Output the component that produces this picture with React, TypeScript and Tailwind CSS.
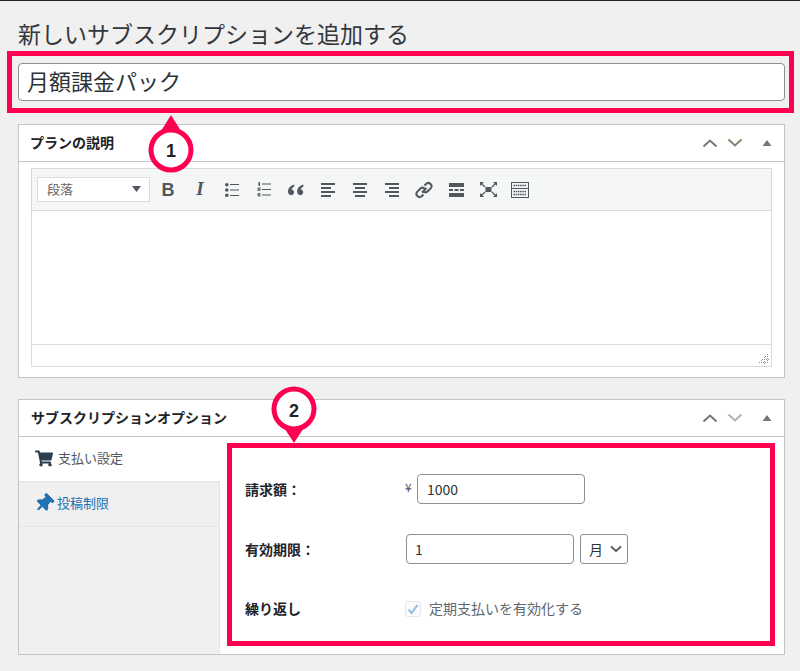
import type { ReactNode } from "react";
import { FaShoppingCart, FaThumbtack } from "react-icons/fa";

const pink = "#ff0050";
const ink = "#50575e";

function Chevrons({ down }: { down: string }) {
  return (
    <div className="flex items-center">
      <svg width="16" height="10" viewBox="0 0 16 10" className="mr-[9px]">
        <path d="M1.5 8.5 8 2.5l6.5 6" fill="none" stroke="#72777c" strokeWidth="2" />
      </svg>
      <svg width="16" height="10" viewBox="0 0 16 10" className="mr-[19px]">
        <path d="M1.5 1.5 8 7.5l6.5-6" fill="none" stroke={down} strokeWidth="2" />
      </svg>
      <svg width="10" height="6" viewBox="0 0 10 6" className="mr-[6px]">
        <path d="M5 0l4.5 6h-9z" fill="#72777c" />
      </svg>
    </div>
  );
}

function Tool({ children }: { children: ReactNode }) {
  return <span className="flex h-[32px] w-[32px] items-center justify-center">{children}</span>;
}

function Align({ rows }: { rows: number[][] }) {
  return (
    <svg width="14" height="14" viewBox="0 0 14 14">
      {rows.map(([x, w], i) => (
        <rect key={i} x={x} y={i * 4} width={w} height="2" fill={ink} />
      ))}
    </svg>
  );
}

function Toolbar() {
  return (
    <div className="flex h-[42px] items-center border-b border-[#dcdcde] bg-[#f5f6f6] pl-[5px] shadow-[0_1px_2px_rgba(0,0,0,0.08)]">
      <div className="flex h-[25px] w-[113px] items-center justify-between border border-[#dcdcde] bg-white pb-[2px] pl-[9px] pr-[8px] text-[13px] text-[#666]">
        段落
        <svg width="9" height="6" viewBox="0 0 9 6">
          <path d="M0 0h9L4.5 6z" fill={ink} />
        </svg>
      </div>
      <div className="ml-[2px] flex items-center">
        <Tool>
          <span className="pt-[2px] font-['Liberation_Sans',sans-serif] text-[18px] font-bold text-[#50575e]">B</span>
        </Tool>
        <Tool>
          <span className="font-['Liberation_Serif',serif] text-[19px] font-bold italic text-[#50575e]">I</span>
        </Tool>
        <Tool>
          <svg width="14" height="14" viewBox="0 0 14 14">
            <circle cx="1.8" cy="1.8" r="1.8" fill={ink} />
            <circle cx="1.8" cy="7" r="1.8" fill={ink} />
            <circle cx="1.8" cy="12.2" r="1.8" fill={ink} />
            <rect x="5" y="1" width="9" height="1" fill={ink} />
            <rect x="5" y="6.5" width="9" height="1" fill={ink} />
            <rect x="5" y="12" width="9" height="1" fill={ink} />
          </svg>
        </Tool>
        <Tool>
          <svg width="14" height="15" viewBox="0 0 14 15">
            <rect x="1.5" y="0" width="1.5" height="4" fill={ink} />
            <rect x="0.5" y="5.5" width="3" height="3.5" fill={ink} opacity="0.8" />
            <rect x="0.5" y="11" width="3" height="3.5" fill={ink} opacity="0.8" />
            <rect x="5" y="1.5" width="9" height="1" fill={ink} />
            <rect x="5" y="7" width="9" height="1" fill={ink} />
            <rect x="5" y="12.5" width="9" height="1" fill={ink} />
          </svg>
        </Tool>
        <Tool>
          <svg width="16" height="12" viewBox="1.5 2.5 14 9.5">
            <path d="M7 2.5C4 3.5 1.5 5.5 1.5 8.6c0 2 1.2 3.1 2.7 3.1s2.6-1.1 2.6-2.5-1-2.4-2.3-2.4c.4-1.1 1.3-2 2.5-2.7zM15 2.5c-3 1-5.5 3-5.5 6.1 0 2 1.2 3.1 2.7 3.1s2.6-1.1 2.6-2.5-1-2.4-2.3-2.4c.4-1.1 1.3-2 2.5-2.7z" fill={ink} />
          </svg>
        </Tool>
        <Tool>
          <Align rows={[[0, 14], [0, 10], [0, 14], [0, 10]]} />
        </Tool>
        <Tool>
          <Align rows={[[0, 14], [2, 10], [0, 14], [2, 10]]} />
        </Tool>
        <Tool>
          <Align rows={[[0, 14], [4, 10], [0, 14], [4, 10]]} />
        </Tool>
        <Tool>
          <svg width="18" height="18" viewBox="0 0 18 18">
            <path d="M7 11.5l4.5-4.5M9.5 4.5l1.8-1.8a3.2 3.2 0 0 1 4.5 4.5l-3 3a3.2 3.2 0 0 1-4.3.3M8.5 13.5l-1.8 1.8a3.2 3.2 0 0 1-4.5-4.5l3-3a3.2 3.2 0 0 1 4.3-.3" fill="none" stroke={ink} strokeWidth="2" />
          </svg>
        </Tool>
        <Tool>
          <svg width="15" height="14" viewBox="0 0 15 14">
            <rect y="0" width="15" height="4" fill={ink} />
            <rect y="10" width="15" height="4" fill={ink} />
            <rect y="6" width="4" height="2" fill={ink} />
            <rect x="5.5" y="6" width="4" height="2" fill={ink} />
            <rect x="11" y="6" width="4" height="2" fill={ink} />
          </svg>
        </Tool>
        <Tool>
          <svg width="17" height="15" viewBox="0 0 17 15">
            <rect x="5.5" y="5" width="6" height="5" fill={ink} />
            <path d="M1 1l4 4M16 1l-4 4M1 14l4-4M16 14l-4-4" stroke={ink} strokeWidth="1.2" />
            <path d="M0 0h4L0 4zM17 0h-4l4 4zM0 15h4l-4-4zM17 15h-4l4-4z" fill={ink} />
          </svg>
        </Tool>
        <Tool>
          <svg width="18" height="16" viewBox="0 0 18 16">
            <rect x=".5" y=".5" width="17" height="15" fill="none" stroke={ink} />
            <rect x="1" y="6" width="16" height="1" fill={ink} />
            <path d="M2.5 3.5h13M2.5 9.5h13M2.5 12.5h13" stroke={ink} strokeWidth="1.5" strokeDasharray="1.5 .7" />
          </svg>
        </Tool>
      </div>
    </div>
  );
}

function App() {
  return (
    <div className="relative h-[671px] w-[800px] overflow-hidden border-t border-[#1d2327] bg-[#f0f0f0] px-[18px] font-['Noto_Sans_CJK_JP','Noto_Sans',sans-serif] text-[#23282d]">
      <h1 className="pt-[18px] pb-[2px] text-[23px] font-normal leading-[28px] text-[#32373c]">新しいサブスクリプションを追加する</h1>

      <input
        readOnly
        value="月額課金パック"
        className="mt-[14px] block h-[38px] w-[767px] rounded-[4px] border border-[#8c8f94] bg-white px-[8px] pb-[5px] text-[22px] text-[#2c3338] outline-none"
      />

      {/* プランの説明 */}
      <section className="mt-[23px] h-[254px] w-[767px] border border-[#c3c4c7] bg-white">
        <header className="flex h-[37px] items-center justify-between border-b border-[#c3c4c7] pl-[11px] pr-[6px]">
          <h2 className="pb-[2px] text-[14px] font-bold text-[#1d2327]">プランの説明</h2>
          <Chevrons down="#8a7f6e" />
        </header>
        <div className="mx-[12px] mt-[6px] w-[741px] border border-[#dcdcde]">
          <Toolbar />
          <div className="h-[134px] border-b border-[#dcdcde] bg-white" />
          <div className="flex h-[21px] items-end justify-end p-[2px]">
            <svg width="10" height="10" viewBox="0 0 10 10">
              <path d="M8.5 0v10M5.5 3v7M2.5 6v4M0 8.5h10M3 5.500h7M6 2.500h4" stroke="#8c8f94" strokeDasharray="1 1" />
            </svg>
          </div>
        </div>
      </section>

      {/* サブスクリプションオプション */}
      <section className="mt-[21px] h-[256px] w-[767px] border border-[#c3c4c7] bg-white">
        <header className="flex h-[37px] items-center justify-between border-b border-[#c3c4c7] pl-[12px] pr-[6px]">
          <h2 className="pb-[2px] text-[14px] font-bold text-[#1d2327]">サブスクリプションオプション</h2>
          <Chevrons down="#a7b4be" />
        </header>
        <div className="flex h-[217px]">
          <nav className="w-[201px] border-r border-[#e4e4e4] bg-[#f0f0f0] text-[13px]">
            <div className="flex h-[44px] w-[201px] items-center gap-[5px] bg-white pb-[2px] pl-[16px] text-[#50575e]">
              <FaShoppingCart className="h-[17px] w-[18px] text-[#2c3e50]" />
              支払い設定
            </div>
            <div className="flex h-[46px] items-center gap-[4px] border-y border-[#e4e4e4] pb-[2px] pl-[16px] text-[#2271b1]">
              <FaThumbtack className="h-[19px] w-[18px] rotate-45 text-[#2271b1]" />
              投稿制限
            </div>
          </nav>
          <div className="flex-1 pl-[25px] pt-[37px] text-[14px]">
            <div className="flex h-[30px] items-center">
              <span className="w-[160px] font-bold text-[#1d2327]">請求額：</span>
              <span className="w-[12px] pb-[4px] text-[12px] text-[#50575e]">¥</span>
              <input readOnly value="1000" className="h-[30px] w-[168px] rounded-[4px] border border-[#8c8f94] px-[9px] text-[14px] text-[#2c3338] outline-none" />
            </div>
            <div className="mt-[30px] flex h-[30px] items-center">
              <span className="w-[161px] font-bold text-[#1d2327]">有効期限：</span>
              <input readOnly value="1" className="h-[30px] w-[168px] rounded-[4px] border border-[#8c8f94] px-[8px] text-[14px] text-[#2c3338] outline-none" />
              <div className="ml-[6px] flex h-[30px] w-[48px] items-center justify-between rounded-[3px] border border-[#8c8f94] pl-[8px] pr-[5px] text-[14px] text-[#2c3338]">
                月
                <svg width="12" height="8" viewBox="0 0 12 8">
                  <path d="M1 1.5l5 4.5 5-4.5" fill="none" stroke="#50575e" strokeWidth="1.8" />
                </svg>
              </div>
            </div>
            <div className="mt-[30px] flex h-[30px] items-center">
              <span className="w-[160px] pb-[2px] font-bold text-[#1d2327]">繰り返し</span>
              <span className="flex h-[16px] w-[16px] items-center justify-center rounded-[3px] border border-[#e3e5e7] bg-[#fbfbfc]">
                <svg width="12" height="11" viewBox="0 0 12 11">
                  <path d="M1.5 5.5l3 3.5 6-8" fill="none" stroke="#9dc3e2" strokeWidth="2.2" />
                </svg>
              </span>
              <span className="ml-[8px] pb-[2px] text-[#60676d]">定期支払いを有効化する</span>
            </div>
          </div>
        </div>
      </section>

      {/* 注釈 */}
      <div className="absolute left-[7px] top-[50px] h-[62px] w-[787px] border-[5px] border-[#ff0050]" />
      <svg className="absolute left-[148px] top-[113px]" width="46" height="60" viewBox="0 0 46 60">
        <path d="M23 1l10 16h-20z" fill={pink} />
        <circle cx="23" cy="36" r="20" fill="#fff" stroke={pink} strokeWidth="5" />
      </svg>
      <span className="absolute left-[148px] top-[137px] w-[46px] text-center font-['Liberation_Sans',sans-serif] text-[18px] font-bold text-[#1d2327]">1</span>
      <div className="absolute left-[227px] top-[442px] h-[203px] w-[548px] border-[5px] border-[#ff0050]" />
      <svg className="absolute left-[271px] top-[383px]" width="46" height="60" viewBox="0 0 46 60">
        <path d="M23 59l-11-17h22z" fill={pink} />
        <circle cx="23" cy="25" r="20" fill="#fff" stroke={pink} strokeWidth="5" />
      </svg>
      <span className="absolute left-[271px] top-[397px] w-[46px] text-center font-['Liberation_Sans',sans-serif] text-[18px] font-bold text-[#1d2327]">2</span>
    </div>
  );
}

export default App;
